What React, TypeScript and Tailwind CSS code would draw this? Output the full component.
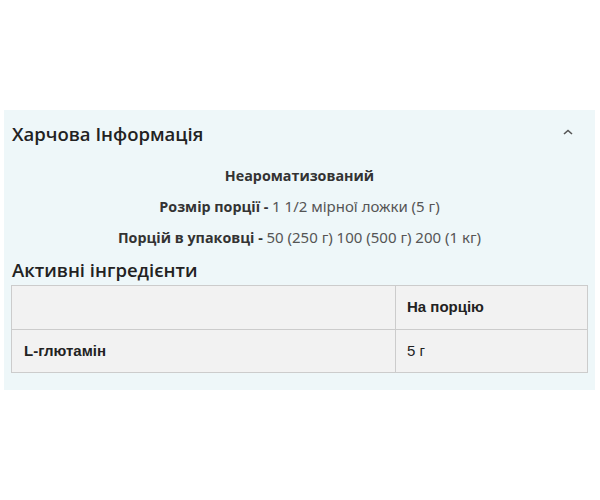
import React from "react";

const NutritionPanel: React.FC = () => {
  return (
    <div className="bg-[#eef7f9] px-[7px] pt-3 pb-[17px] w-full">
      <div className="flex items-center justify-between pl-[1px] pr-[15px]">
        <h2 className="text-[18.5px] font-semibold text-[#222] font-['Open_Sans',sans-serif] leading-[24px]">
          Харчова Інформація
        </h2>
        <svg width="10" height="6" viewBox="0 0 10 6" className="text-[#555] -mt-[4px]">
          <path d="M1 5 L5 1.5 L9 5" fill="none" stroke="currentColor" strokeWidth="1.6" />
        </svg>
      </div>

      <div className="mt-[20px] flex flex-col items-center gap-[10px] text-[14.3px] leading-[20px] font-['Open_Sans',sans-serif] text-[#333]">
        <p className="font-bold h-[20px]">Неароматизований</p>
        <p className="h-[21px]">
          <span className="font-bold">Розмір порції - </span>
          <span className="text-[15px] text-[#555] font-['Noto_Sans',sans-serif]">1 1/2 мірної ложки (5 г)</span>
        </p>
        <p className="h-[21px]">
          <span className="font-bold">Порцій в упаковці - </span>
          <span className="text-[15px] text-[#555] font-['Noto_Sans',sans-serif]">50 (250 г) 100 (500 г) 200 (1 кг)</span>
        </p>
      </div>

      <h3 className="mt-[10px] pl-[1px] text-[18.5px] font-semibold text-[#222] font-['Open_Sans',sans-serif] leading-[24px]">
        Активні інгредієнти
      </h3>

      <table className="mt-[3px] w-[577px] border-collapse bg-[#f2f2f2] text-[15px] font-['Liberation_Sans',Arial,sans-serif] text-[#222]">
        <tbody>
          <tr className="h-[44px]">
            <td className="border border-[#cccccc] w-[384px] px-3"></td>
            <td className="border border-[#cccccc] pl-[11px] font-bold">На порцію</td>
          </tr>
          <tr className="h-[43px]">
            <td className="border border-[#cccccc] px-3 font-bold">L-глютамін</td>
            <td className="border border-[#cccccc] pl-[11px]">5 г</td>
          </tr>
        </tbody>
      </table>
    </div>
  );
};

export default function App() {
  return (
    <div className="w-[600px] h-[500px] bg-white pt-[110px] pl-[4px] pr-[5px]">
      <NutritionPanel />
    </div>
  );
}
